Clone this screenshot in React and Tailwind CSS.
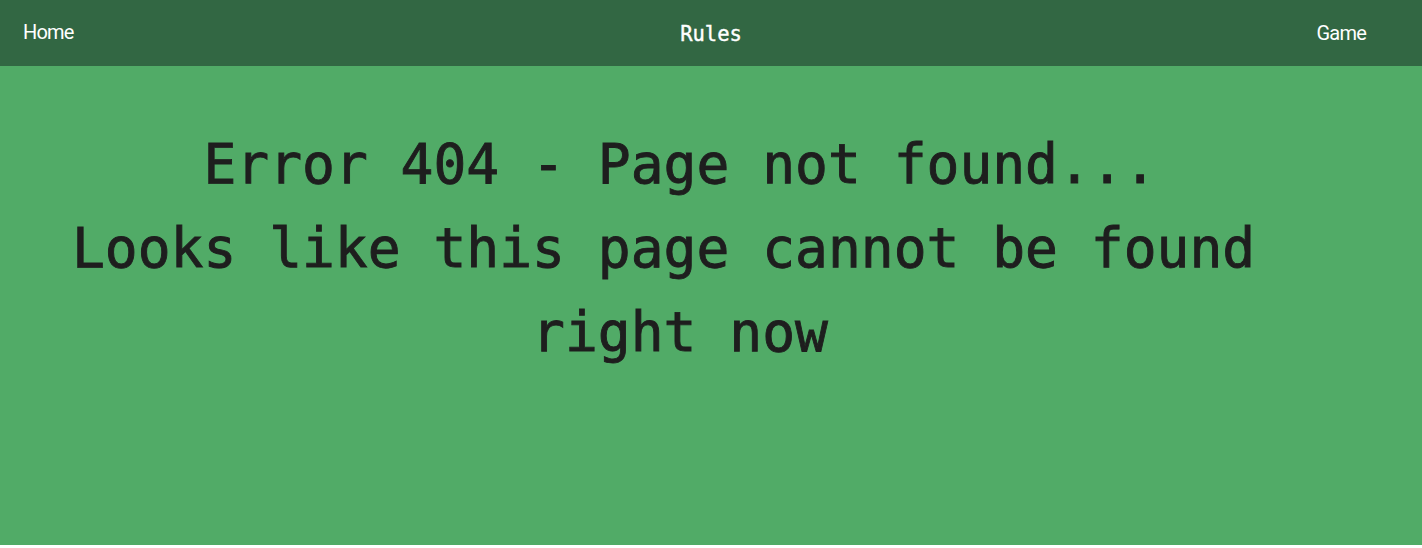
export default function App() {
  return (
    <div className="w-full bg-white">
      <header className="grid grid-cols-3 items-center h-[66px] bg-[#326743] text-white">
        <a className="pl-[23px] pb-[2px] text-[20px] tracking-[-0.8px] font-['Roboto',sans-serif]">Home</a>
        <a className="justify-self-center pt-[3px] text-[20.5px] [-webkit-text-stroke:0.4px_#ffffff] font-['DejaVu_Sans_Mono',monospace]">Rules</a>
        <a className="justify-self-end pr-[56px] text-[20px] tracking-[-0.8px] font-['Roboto',sans-serif]">Game</a>
      </header>
      <main className="h-[479px] bg-[#51ab67] pt-[56px]">
        <h1 className="pr-[62px] text-center text-[54.6px] leading-[84px] text-[#1e1e1e] [-webkit-text-stroke:0.9px_#1e1e1e] font-['DejaVu_Sans_Mono',monospace]">
          Error 404 - Page not found...
          <br />
          Looks like this page cannot be found{'\u00a0'}
          <br />
          right now
        </h1>
      </main>
    </div>
  );
}
